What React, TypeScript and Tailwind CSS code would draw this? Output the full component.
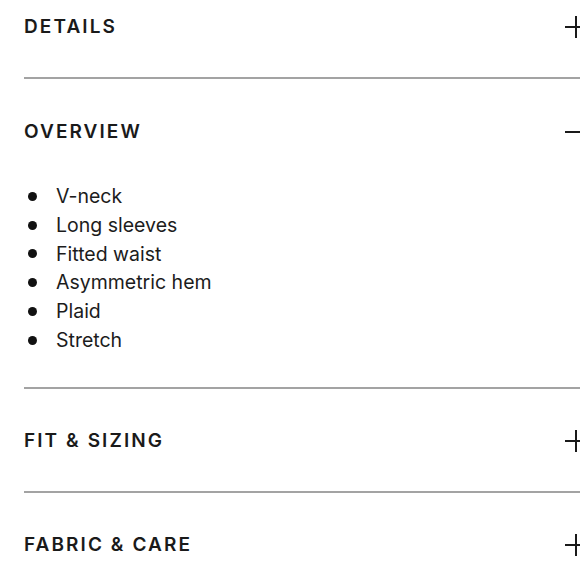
const font = { fontFamily: 'Inter, "Noto Sans", sans-serif' };

function Plus() {
  return (
    <svg width="22" height="22" viewBox="0 0 22 22" className="shrink-0">
      <path d="M0 11h22M11 0v22" stroke="#1a1a1a" strokeWidth="2" fill="none" />
    </svg>
  );
}

function Minus() {
  return (
    <svg width="22" height="22" viewBox="0 0 22 22" className="shrink-0">
      <path d="M0 11h22" stroke="#1a1a1a" strokeWidth="2" fill="none" />
    </svg>
  );
}

function Header({ title, open, className }: { title: string; open?: boolean; className: string }) {
  return (
    <div className={`flex items-center justify-between ${className}`}>
      <span className="text-[19px] leading-[24px] font-semibold tracking-[0.11em] text-[#1a1a1a]">{title}</span>
      {open ? <Minus /> : <Plus />}
    </div>
  );
}

const items = ['V-neck', 'Long sleeves', 'Fitted waist', 'Asymmetric hem', 'Plaid', 'Stretch'];

export default function App() {
  return (
    <div className="w-[580px] h-[580px] overflow-hidden bg-white pl-6" style={font}>
      <div className="w-[563px]">
        {/* Details */}
        <div className="border-b-2 border-[#a3a3a3]">
          <Header title="DETAILS" className="pt-[15px] pb-[38px]" />
        </div>

        {/* Overview, open */}
        <div className="border-b-2 border-[#a3a3a3] pb-[32px]">
          <Header title="OVERVIEW" open className="pt-[41px] pb-[38px]" />
          <ul>
            {items.map((item) => (
              <li key={item} className="flex items-center text-[19.5px] leading-[28.8px] text-[#1c1c1c]">
                <span className="ml-[4px] mr-[19px] w-[9px] h-[9px] rounded-full bg-[#111]" />
                {item}
              </li>
            ))}
          </ul>
        </div>

        <div className="border-b-2 border-[#a3a3a3]">
          <Header title="FIT & SIZING" className="pt-[40px] pb-[38px]" />
        </div>

        <div>
          <Header title="FABRIC & CARE" className="pt-[40px] pb-[38px]" />
        </div>
      </div>
    </div>
  );
}
